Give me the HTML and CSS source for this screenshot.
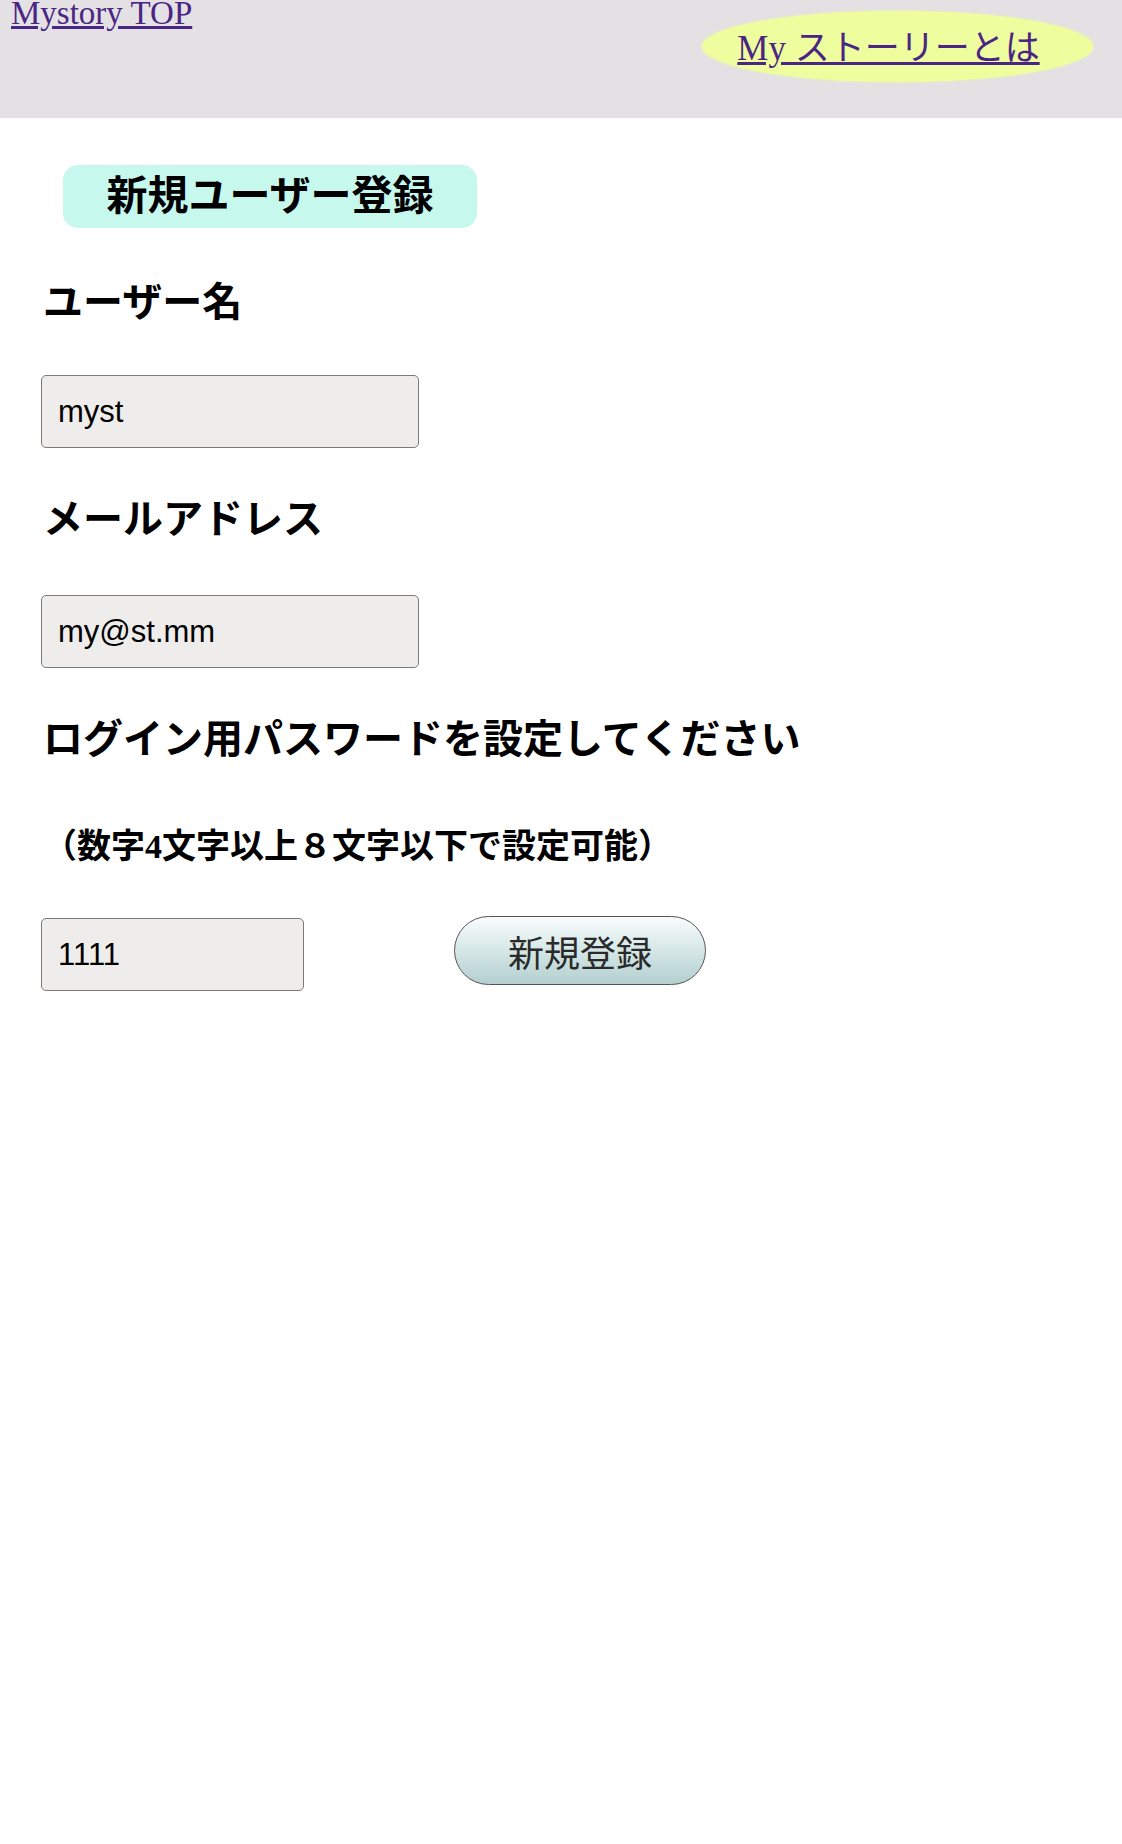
FILE: index.html
```html
<!DOCTYPE html>
<html lang="ja">
<head>
<meta charset="utf-8">
<title>新規ユーザー登録</title>
<link rel="stylesheet" href="styles.css">
</head>
<body>
<header class="top-bar">
  <a class="top-link" href="#">Mystory TOP</a>
  <div class="about-pill"><a class="about-link" href="#">My ストーリーとは</a></div>
</header>
<main class="content">
  <h1 class="page-title">新規ユーザー登録</h1>
  <form class="signup">
    <h2 class="field-label">ユーザー名</h2>
    <input class="text-field" type="text" value="myst">
    <h2 class="field-label label-mail">メールアドレス</h2>
    <input class="text-field field-mail" type="text" value="my@st.mm">
    <h2 class="field-label label-pass">ログイン用パスワードを設定してください</h2>
    <p class="field-note">（数字4文字以上８文字以下で設定可能）</p>
    <div class="submit-row">
      <input class="text-field field-short" type="text" value="1111">
      <button class="submit-btn" type="button">新規登録</button>
    </div>
  </form>
</main>
</body>
</html>
```
FILE: styles.css
```css
html, body {
  margin: 0;
  padding: 0;
  background: #ffffff;
}
body {
  font-family: "Liberation Serif", "Noto Sans CJK JP", serif;
  color: #000;
}
.top-bar {
  height: 118px;
  background: #e3e1e3;
  display: flex;
  justify-content: space-between;
  align-items: flex-start;
}
.top-link {
  margin-left: 11px;
  font-size: 33px;
  line-height: 26px;
  color: #4b2583;
  text-decoration: underline;
}
.about-pill {
  margin-top: 11px;
  margin-right: 29px;
  width: 391px;
  height: 71px;
  border-radius: 50%;
  background: #eefd9d;
  box-shadow: 0 0 3px #eefd9d;
  display: flex;
  align-items: center;
  justify-content: center;
  padding: 3px 18px 0 0;
  box-sizing: border-box;
}
.about-link {
  font-size: 35px;
  line-height: 1;
  color: #4b2583;
  text-decoration: underline;
}
.content {
  padding-left: 41px;
}
.page-title {
  margin: 47px 0 0 22px;
  width: 414px;
  height: 63px;
  box-sizing: border-box;
  border-radius: 15px;
  background: #c7f8ee;
  font-size: 41px;
  line-height: 63px;
  font-weight: bold;
  text-align: center;
}
.signup {
  display: flex;
  flex-direction: column;
  align-items: flex-start;
  margin: 0;
}
.field-label {
  margin: 47px 0 0 2px;
  font-size: 40px;
  line-height: 56px;
  height: 56px;
  font-weight: bold;
}
.label-mail {
  margin-top: 44px;
}
.label-pass {
  margin-top: 44px;
}
.text-field {
  margin-top: 44px;
  width: 378px;
  height: 73px;
  box-sizing: border-box;
  border: 1px solid #7a7a7a;
  border-radius: 5px;
  background: #efecec;
  padding: 0 0 0 16px;
  font-family: "Liberation Sans", Arial, sans-serif;
  font-size: 31px;
  color: #000;
  outline: none;
}
.field-mail {
  margin-top: 47px;
}
.field-note {
  margin: 55px 0 0 2px;
  font-size: 34px;
  line-height: 48px;
  height: 48px;
  font-weight: bold;
}
.submit-row {
  margin-top: 45px;
  display: flex;
  align-items: flex-start;
  gap: 150px;
}
.field-short {
  margin-top: 2px;
  width: 263px;
}
.submit-btn {
  width: 252px;
  height: 69px;
  border: 1px solid #555;
  border-radius: 35px;
  background: linear-gradient(to bottom, #f9fcfc 0%, #d9e9e9 45%, #b3cfcf 100%);
  font-family: "Noto Sans CJK JP", sans-serif;
  font-size: 36px;
  color: #2a2a2a;
  padding: 0;
}
```
